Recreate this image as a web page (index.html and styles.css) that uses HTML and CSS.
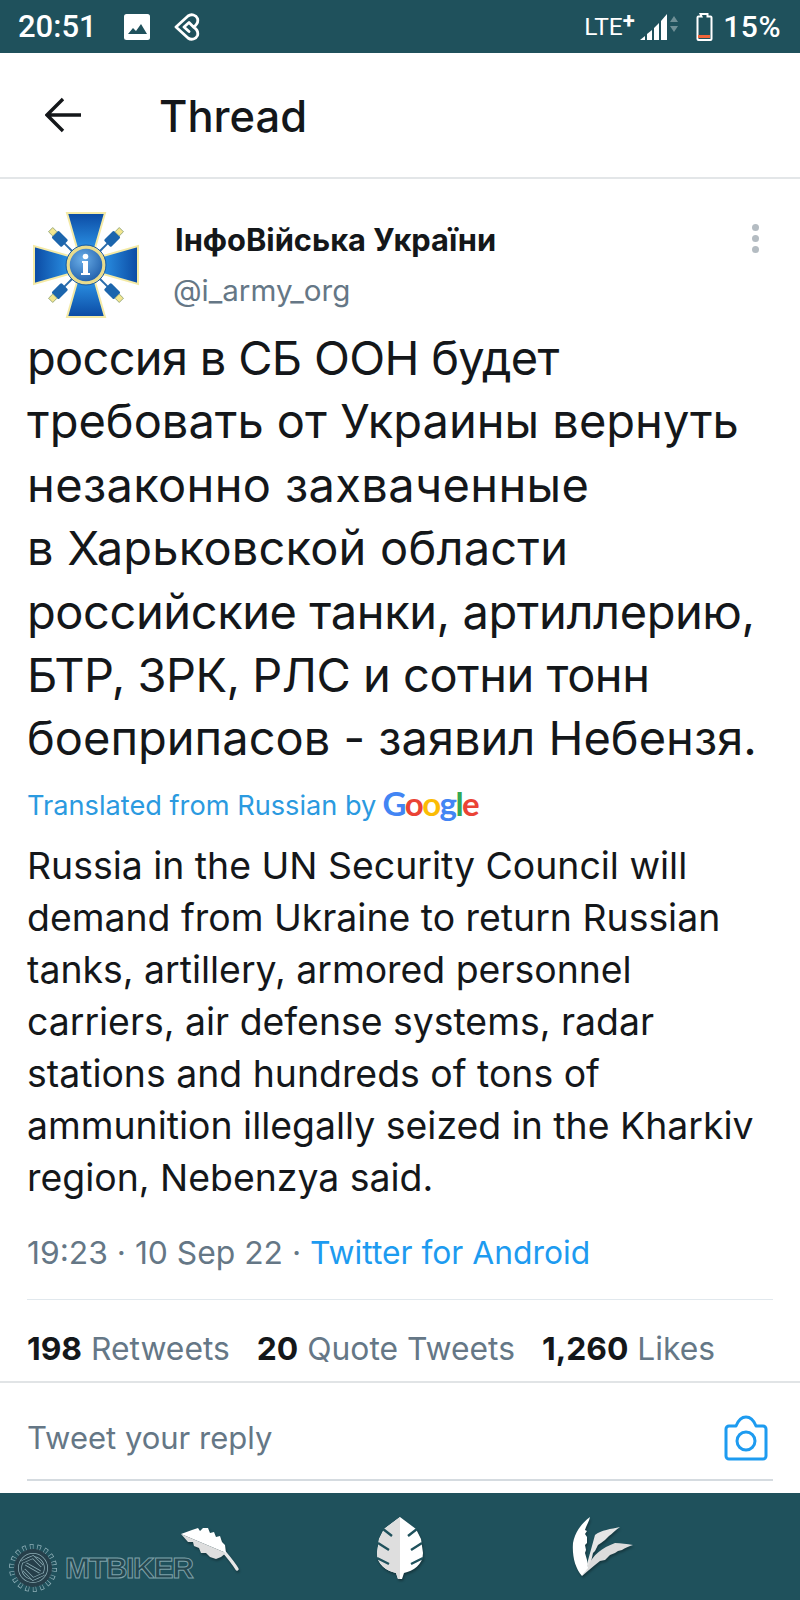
FILE: index.html
```html
<!DOCTYPE html>
<html lang="en">
<head>
<meta charset="utf-8">
<title>Thread</title>
<link rel="stylesheet" href="styles.css">
</head>
<body>
<div class="status">
  <div class="status-left">
    <span class="clock">20:51</span>
    <svg class="ic-image" viewBox="0 0 26 26"><rect width="26" height="26" rx="2.500" fill="#fff"/><path d="M4 20l5-6 3 3 5-7 6 10z" fill="#1f515c"/></svg>
    <svg class="ic-heart" viewBox="0 0 28 28"><path d="M4 14 16 3C19.500 .5 24 2 25.500 5.500 26.500 9 24.500 12 21.500 14 24.500 16 26.500 19 25.500 22.500 24 26 19.500 27.500 16 25zM21.500 14 17 9.500 12 14 17 18.500" fill="none" stroke="#fff" stroke-width="2.800" stroke-linejoin="round" stroke-linecap="round"/></svg>
  </div>
  <div class="status-right">
    <span class="lte">LTE<sup class="plus">+</sup></span>
    <svg class="ic-signal" viewBox="0 0 38 28"><path d="M0 27 5 23V27zM7 21l5-4V27H7zM14 15l5-5V27h-5zM21 8l6-7V27h-6z" fill="#fff"/><path d="M30 9l4-6 4 6zM30 13h8l-4 6z" fill="#6f8f96"/></svg>
    <svg class="ic-batt" viewBox="0 0 18 28"><path d="M5.500 1h7v2.500h3a1 1 0 0 1 1 1V26a1 1 0 0 1-1 1h-12a1 1 0 0 1-1-1V4.500a1 1 0 0 1 1-1h3z" fill="none" stroke="#fff" stroke-width="2"/><rect x="3" y="22" width="12" height="3" fill="#f0653a"/></svg>
    <span class="pct">15%</span>
  </div>
</div>

<header class="bar">
  <svg class="ic-back" viewBox="0 0 36 36"><path d="M18 2 2 18l16 16M2 18h34" fill="none" stroke="#14171a" stroke-width="3.400"/></svg>
  <h1 class="bar-title">Thread</h1>
</header>

<main class="tweet">
  <div class="author">
    <svg class="avatar" viewBox="0 0 106 106">
      <defs>
        <linearGradient id="gt" x1="0" y1="0" x2="0" y2="1"><stop offset="0" stop-color="#0b4aa3"/><stop offset="1" stop-color="#2a8fe2"/></linearGradient>
        <linearGradient id="gb" x1="0" y1="1" x2="0" y2="0"><stop offset="0" stop-color="#0b4aa3"/><stop offset="1" stop-color="#2a8fe2"/></linearGradient>
        <linearGradient id="gl" x1="0" y1="0" x2="1" y2="0"><stop offset="0" stop-color="#0b4aa3"/><stop offset="1" stop-color="#2a8fe2"/></linearGradient>
        <linearGradient id="gr" x1="1" y1="0" x2="0" y2="0"><stop offset="0" stop-color="#0b4aa3"/><stop offset="1" stop-color="#2a8fe2"/></linearGradient>
        <radialGradient id="gc" cx=".4" cy=".35" r=".8"><stop offset="0" stop-color="#6aaee8"/><stop offset="1" stop-color="#124f9e"/></radialGradient>
        <g id="cable">
          <rect x="52" y="20" width="2" height="16" fill="#2a6cab"/>
          <rect x="48" y="9" width="10" height="14" rx="1.500" fill="#1c65ad"/>
          <rect x="50" y="3" width="6" height="6" fill="#f3e68f" stroke="#8a9f73" stroke-width=".8"/>
        </g>
      </defs>
      <use href="#cable" transform="rotate(45 53 53)"/>
      <use href="#cable" transform="rotate(135 53 53)"/>
      <use href="#cable" transform="rotate(225 53 53)"/>
      <use href="#cable" transform="rotate(315 53 53)"/>
      <path d="M34 1H72L62 36H44Z" fill="url(#gt)" stroke="#f4eaa6" stroke-width="2"/>
      <path d="M34 105H72L62 70H44Z" fill="url(#gb)" stroke="#f4eaa6" stroke-width="2"/>
      <path d="M1 34V72L36 62V44Z" fill="url(#gl)" stroke="#f4eaa6" stroke-width="2"/>
      <path d="M105 34V72L70 62V44Z" fill="url(#gr)" stroke="#f4eaa6" stroke-width="2"/>
      <circle cx="53" cy="53" r="18" fill="url(#gc)" stroke="#e9dc8d" stroke-width="3.500"/>
      <circle cx="53" cy="53" r="20" fill="none" stroke="#1a5aa0" stroke-width="1"/>
      <path d="M49 49h6v12h2v2H48v-2h2V51h-1z" fill="#fff"/><circle cx="52.500" cy="44.500" r="2.800" fill="#fff"/>
    </svg>
    <div class="names">
      <div class="name">ІнфоВійська України</div>
      <div class="handle">@i_army_org</div>
    </div>
    <div class="more"><i></i><i></i><i></i></div>
  </div>

  <p class="orig"><span class="ln ln-1">россия в СБ ООН будет</span><span class="ln">требовать от Украины вернуть</span><span class="ln ln-3">незаконно захваченные</span><span class="ln ln-4">в Харьковской области</span><span class="ln ln-5">российские танки, артиллерию,</span><span class="ln ln-6">БТР, ЗРК, РЛС и сотни тонн</span><span class="ln">боеприпасов - заявил Небензя.</span></p>

  <div class="translated">Translated from Russian by <span class="google"><span class="g-b">G</span><span class="g-r">o</span><span class="g-y">o</span><span class="g-b">g</span><span class="g-g">l</span><span class="g-r">e</span></span></div>

  <p class="trans">Russia in the UN Security Council will<br>demand from Ukraine to return Russian<br>tanks, artillery, armored personnel<br>carriers, air defense systems, radar<br>stations and hundreds of tons of<br>ammunition illegally seized in the Kharkiv<br>region, Nebenzya said.</p>

  <div class="meta">19:23 · 10 Sep 22 · <span class="link">Twitter for Android</span></div>
</main>

<div class="rule-inset"></div>

<div class="stats">
  <span><b>198</b> Retweets</span>
  <span><b>20</b> Quote Tweets</span>
  <span><b>1,260</b> Likes</span>
</div>

<div class="reply">
  <div class="reply-row">
    <span class="reply-text">Tweet your reply</span>
    <svg class="ic-cam" viewBox="0 0 44 46"><path d="M2 14a3 3 0 0 1 3-3h7C14 6 17 2 22 2s8 4 10 9h7a3 3 0 0 1 3 3v27a3 3 0 0 1-3 3H5a3 3 0 0 1-3-3z" fill="none" stroke="#1d9bf0" stroke-width="3" stroke-linejoin="round"/><circle cx="22" cy="26" r="9" fill="none" stroke="#1d9bf0" stroke-width="3"/></svg>
  </div>
</div>

<nav class="nav">
  <svg class="ic-feather" viewBox="0 0 75 70">
    <path d="M55 38C60 44 64 49 67 54" fill="none" stroke="#e8e8e8" stroke-width="3.400" stroke-linecap="round"/>
    <path d="M11 19 22 15 28 13 30 16 33 13 38 13 40 18 44 17 46 22 50 21 52 27 55 30 56 38Z" fill="#fff"/>
    <path d="M11 19 18 27 23 27 24 31 29 33 31 38 36 38 40 42 46 44 51 42 56 38Z" fill="#dedede"/>
  </svg>
  <svg class="ic-leaf" viewBox="0 0 50 64"><path d="M25 0 41 12 46 22 48 36C48 48 38 54 29 56L27 62H23L21 56C12 54 2 48 2 36L4 22 9 12z" fill="#fff"/><path d="M25 0 9 12 4 22 2 36C2 48 12 54 21 56L23 62H25z" fill="#dedede"/><path d="M8 12 17 19M3 26 14 33M2 41 14 47M42 12 33 19M47 26 36 33M48 41 36 47" stroke="#1f515c" stroke-width="2.400" fill="none"/></svg>
  <svg class="ic-palm" viewBox="0 0 80 80">
    <path d="M23 58 22 54 30 25C36 20 46 19 55 17 50 20 47 24 44 26L40 30 36 33 33 35 30 41 28 43 26 52Z" fill="#e6e6e6"/>
    <path d="M17 66 22 58C28 44 37 38 50 33 56 33 62 34 68 35 64 36 60 38 57 40L53 41 50 43 45 45 40 50 35 51 30 55 24 60Z" fill="#dcdcdc"/>
    <path d="M25 7C24 12 21 16 20 20L22 21 20 24 22 27 22 33 20 35 21 40 20 43 22 50 23 58 17 66C10 58 7 46 8 33 10 22 17 13 25 7Z" fill="#fff"/>
  </svg>
</nav>

<div class="watermark">
  <svg class="gear" viewBox="0 0 48 48">
    <circle cx="24" cy="24" r="21" fill="none" stroke="#8fb0b8" stroke-width="6" stroke-dasharray="3.660 3.660"/>
    <circle cx="24" cy="24" r="21" fill="none" stroke="#1f515c" stroke-width="4.400" stroke-dasharray="2.400 4.920" stroke-dashoffset="-.63"/>
    <circle cx="24" cy="24" r="18.500" fill="#263f4a" stroke="#263f4a"/>
    <circle cx="24" cy="24" r="13" fill="none" stroke="#8fb0b8" stroke-width="4"/>
    <circle cx="24" cy="24" r="13" fill="none" stroke="#263f4a" stroke-width="2.500"/>
    <path d="M13 18 24 13 33 22M35 30 24 35 15 26M17 20 31 28" fill="none" stroke="#8fb0b8" stroke-width="3.400"/>
    <path d="M13 18 24 13 33 22M35 30 24 35 15 26M17 20 31 28" fill="none" stroke="#263f4a" stroke-width="2"/>
  </svg>
  <span class="wm-text">MTBIKER</span>
</div>
</body>
</html>
```
FILE: styles.css
```css
* { box-sizing: border-box; }
html, body { margin: 0; padding: 0; }
body {
  width: 800px;
  height: 1600px;
  position: relative;
  overflow: hidden;
  background: #fff;
  color: #14171a;
  font-family: Inter, "Noto Sans", sans-serif;
}
svg { display: block; flex: none; }

.status {
  height: 53px;
  background: #1f515c;
  color: #fff;
  display: flex;
  align-items: center;
  justify-content: space-between;
  padding: 0 19px 0 18px;
  font-family: Roboto, sans-serif;
}
.status-left, .status-right { display: flex; align-items: center; }
.clock { font-size: 31px; font-weight: 500; width: 106px; }
.ic-image { width: 26px; height: 26px; }
.ic-heart { width: 28px; height: 28px; margin-left: 22px; }
.lte { font-size: 24.500px; font-weight: 400; display: flex; width: 56px; }
.plus { font-size: 22px; font-weight: 700; line-height: 1; margin: -2px 0 0; }
.ic-signal { width: 38px; height: 28px; }
.ic-batt { width: 18px; height: 28px; margin-left: 17px; }
.pct { font-size: 30px; font-weight: 500; margin-left: 10px; letter-spacing: .5px; }

.bar {
  height: 126px;
  border-bottom: 2px solid #e3e6e8;
  display: flex;
  align-items: center;
  padding-left: 45px;
}
.ic-back { width: 36px; height: 36px; }
.bar-title { margin: 4px 0 0 78px; font-size: 43.500px; font-weight: 500; line-height: 1; }

.tweet { padding: 0 27px; }
.author { display: flex; align-items: flex-start; padding-top: 31px; height: 147px; }
.avatar { width: 106px; height: 106px; margin-left: 6px; margin-top: 2px; }
.names { margin-left: 36px; }
.name { font-size: 30.800px; font-weight: 700; line-height: 44px; margin-top: 8px; }
.handle { font-size: 29.600px; color: #657786; line-height: 44px; margin: 6px 0 0 -2px; }
.more { margin-left: auto; margin-right: 14px; margin-top: 14px; display: flex; flex-direction: column; gap: 4px; }
.more i { width: 7px; height: 7px; border-radius: 50%; background: #b4bcc2; display: block; }

.orig { margin: 0; font-size: 47px; line-height: 63.400px; }
.ln { display: block; white-space: nowrap; }
.ln-1 { letter-spacing: -.7px; }
.ln-3 { letter-spacing: .36px; }
.ln-4 { letter-spacing: .2px; }
.ln-5 { letter-spacing: -.42px; }
.ln-6 { letter-spacing: -.5px; }
.translated { margin-top: 14px; font-size: 27.200px; line-height: 44px; color: #2b9ae0; display: flex; gap: 6px; align-items: center; }
.google { font-family: Lato, sans-serif; font-size: 33px; font-weight: 700; letter-spacing: -1.500px; position: relative; top: -3px; }
.g-b { color: #4285f4; }
.g-r { color: #ea4335; }
.g-y { color: #fbbc05; }
.g-g { color: #34a853; }
.trans { margin: 12px 0 0; font-size: 37.400px; line-height: 52px; color: #14171a; }
.meta { margin-top: 27px; font-size: 31.800px; line-height: 44px; color: #657786; }
.link { color: #1d9bf0; }

.rule-inset { height: 1px; background: #e1e8ed; margin: 24px 27px 0; }
.stats {
  height: 83px;
  border-bottom: 2px solid #e1e4e6;
  padding: 16px 27px 0;
  display: flex;
  gap: 27px;
  align-items: center;
  font-size: 31.800px;
  color: #657786;
}
.stats b { color: #14171a; font-weight: 700; }

.reply { padding: 0 27px; }
.reply-row {
  height: 98px;
  display: flex;
  align-items: center;
  justify-content: space-between;
  border-bottom: 2px solid #d5dbe0;
  font-size: 31px;
  color: #657786;
  padding: 14px 5px 0 0;
}
.ic-cam { width: 44px; height: 46px; }

.nav {
  position: absolute;
  left: 0; right: 0; bottom: 0;
  height: 107px;
  background: #1f515c;
}
.nav svg { position: absolute; filter: drop-shadow(1px 2px 1px rgba(0,0,0,.3)); }
.ic-feather { left: 170px; top: 22px; width: 75px; height: 70px; }
.ic-leaf { left: 375px; top: 24px; width: 50px; height: 64px; }
.ic-palm { left: 565px; top: 17px; width: 80px; height: 80px; }

.watermark { position: absolute; left: 9px; top: 1544px; display: flex; align-items: center; gap: 8px; }
.gear { width: 48px; height: 48px; }
.wm-text {
  font-family: "Liberation Sans", sans-serif;
  font-weight: 700;
  font-size: 30px;
  color: #244750;
  -webkit-text-stroke: 1px #7ea1a9;
  letter-spacing: -1.300px;
}
```
